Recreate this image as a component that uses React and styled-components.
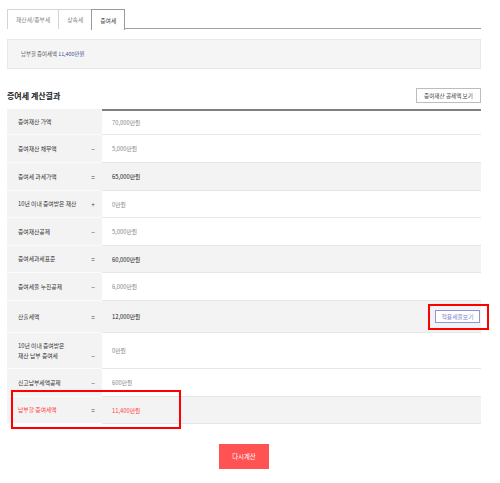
import React from "react";
import styled, { createGlobalStyle } from "styled-components";

const GlobalStyle = createGlobalStyle`
  html, body {
    margin: 0;
    padding: 0;
    background: #fff;
    font-family: "Noto Sans CJK KR", "Noto Sans", sans-serif;
  }
  * { box-sizing: border-box; }
`;

const rows = [
  { label: "증여재산 가액", op: "", value: "70,000만원", h: 26 },
  { label: "증여재산 채무액", op: "−", value: "5,000만원", h: 28 },
  { label: "증여세 과세가액", op: "=", value: "65,000만원", h: 28, strong: true },
  { label: "10년 이내 증여받은 재산", op: "+", value: "0만원", h: 27 },
  { label: "증여재산공제", op: "−", value: "5,000만원", h: 28 },
  { label: "증여세과세표준", op: "=", value: "60,000만원", h: 27, strong: true },
  { label: "증여세율 누진공제", op: "−", value: "6,000만원", h: 28 },
  { label: "산출세액", op: "=", value: "12,000만원", h: 32, strong: true, rateBtn: true },
  { label: ["10년 이내 증여받은", "재산 납부 증여세"], op: "−", value: "0만원", h: 36 },
  { label: "신고납부세액공제", op: "−", value: "600만원", h: 28 },
  { label: "납부할 증여세액", op: "=", value: "11,400만원", h: 27, strong: true, red: true, marked: true },
];

const App = () => {
  return (
    <Page>
      <GlobalStyle />
      <Tabs>
        <Tab>재산세/종부세</Tab>
        <Tab>상속세</Tab>
        <Tab $active>증여세</Tab>
      </Tabs>

      <Summary>
        납부할 증여세액 <SummaryNum>11,400만원</SummaryNum>
      </Summary>

      <TitleRow>
        <Title>증여세 계산결과</Title>
        <GhostButton>증여재산 공제액 보기</GhostButton>
      </TitleRow>

      <Table>
        {rows.map((row, i) => (
          <Row key={i} style={{ height: row.h }}>
            <LabelCell $red={row.red}>
              <LabelText>
                {Array.isArray(row.label)
                  ? row.label.map((l) => <div key={l}>{l}</div>)
                  : row.label}
              </LabelText>
              <Op $end={Array.isArray(row.label)}>{row.op}</Op>
            </LabelCell>
            <ValueCell $first={i === 0} $strong={row.strong} $red={row.red}>
              {row.value}
              {row.rateBtn && (
                <RateWrap>
                  <RateButton>적용세율보기</RateButton>
                  <Marker $top={-6} $left={-7} $w={61} $h={26} />
                </RateWrap>
              )}
            </ValueCell>
            {row.marked && <Marker $top={-7} $left={4} $w={170} $h={39} />}
          </Row>
        ))}
      </Table>

      <Footer>
        <RedButton>다시계산</RedButton>
      </Footer>
    </Page>
  );
};

export default App;

// Styled Components
const Page = styled.div`
  width: 474px;
  margin-left: 7px;
  padding-top: 9px;
  padding-bottom: 14px;
`;

const Tabs = styled.div`
  display: flex;
  height: 20px;
  border-bottom: 1px solid #a0a0a0;
`;

const Tab = styled.div`
  height: ${(p) => (p.$active ? "21px" : "20px")};
  padding: 0 8px;
  display: flex;
  align-items: center;
  font-size: 5.8px;
  color: ${(p) => (p.$active ? "#444" : "#8a8a8a")};
  background: #fff;
  border: 1px solid ${(p) => (p.$active ? "#9a9a9a" : "#d4d4d4")};
  border-bottom: none;
  margin-right: -1px;
  position: relative;
  z-index: ${(p) => (p.$active ? 1 : 0)};
`;

const Summary = styled.div`
  margin-top: 10px;
  height: 30px;
  background: #f5f5f5;
  border: 1px solid #e9e9e9;
  padding-left: 13px;
  display: flex;
  align-items: center;
  font-size: 5.4px;
  color: #555;
  white-space: pre;
`;

const SummaryNum = styled.span`
  color: #4a5794;
`;

const TitleRow = styled.div`
  margin-top: 19px;
  height: 15px;
  display: flex;
  align-items: center;
  justify-content: space-between;
`;

const Title = styled.div`
  font-size: 8px;
  font-weight: 700;
  color: #222;
`;

const GhostButton = styled.div`
  width: 65px;
  height: 15px;
  border: 1px solid #bdbdbd;
  background: #fff;
  display: flex;
  align-items: center;
  justify-content: center;
  font-size: 5.6px;
  color: #444;
`;

const Table = styled.div`
  margin-top: 6px;
`;

const Row = styled.div`
  position: relative;
  display: grid;
  grid-template-columns: 95px 1fr;
`;

const LabelCell = styled.div`
  background: #f3f3f3;
  border-bottom: 1px solid #fbfbfb;
  display: flex;
  align-items: center;
  justify-content: space-between;
  padding: 0 4px 0 11px;
  font-size: 5.8px;
  line-height: 10px;
  color: ${(p) => (p.$red ? "#ff3f3f" : "#333")};
`;

const LabelText = styled.div``;

const Op = styled.div`
  width: 10px;
  text-align: center;
  color: #444;
  font-size: 6.5px;
  align-self: ${(p) => (p.$end ? "flex-end" : "center")};
  margin-bottom: ${(p) => (p.$end ? "7px" : "0")};
`;

const ValueCell = styled.div`
  display: flex;
  align-items: center;
  justify-content: space-between;
  padding: 0 1px 0 10px;
  font-size: 5.8px;
  background: ${(p) => (p.$strong ? "#f3f3f3" : "#fff")};
  color: ${(p) => (p.$red ? "#ff3f3f" : p.$strong ? "#222" : "#888")};
  border-bottom: 1px solid #e6e6e6;
  border-top: ${(p) => (p.$first ? "2px solid #808080" : "none")};
`;

const RateWrap = styled.div`
  position: relative;
`;

const RateButton = styled.div`
  width: 45px;
  height: 13px;
  background: #fff;
  border: 1px solid #8f93d9;
  display: flex;
  align-items: center;
  justify-content: center;
  font-size: 5.8px;
  color: #7f85cc;
`;

const Marker = styled.div`
  position: absolute;
  top: ${(p) => p.$top}px;
  left: ${(p) => p.$left}px;
  width: ${(p) => p.$w}px;
  height: ${(p) => p.$h}px;
  border: 2px solid #ff0000;
  pointer-events: none;
`;

const Footer = styled.div`
  margin-top: 20px;
  display: flex;
  justify-content: center;
`;

const RedButton = styled.div`
  width: 50px;
  height: 25px;
  background: #ff5252;
  color: #fff;
  font-size: 6.4px;
  display: flex;
  align-items: center;
  justify-content: center;
`;
